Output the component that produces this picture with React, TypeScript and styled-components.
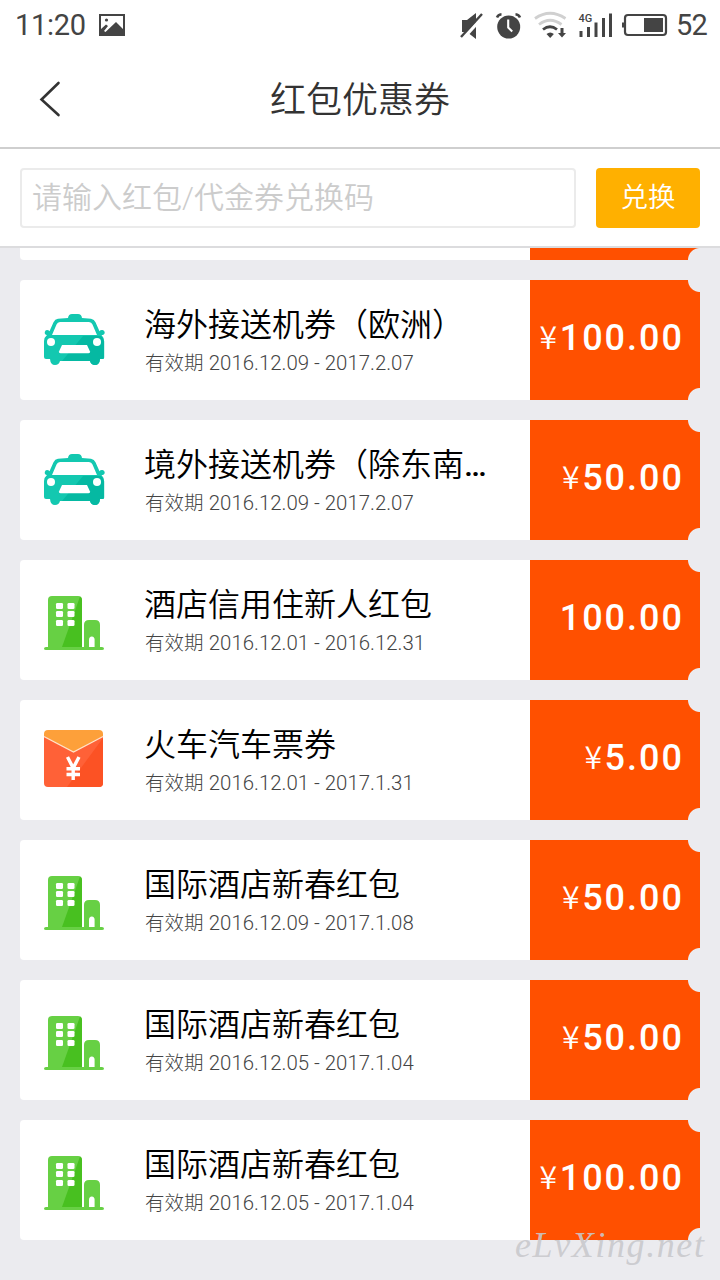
import React from "react";
import styled, { createGlobalStyle } from "styled-components";

const GlobalStyle = createGlobalStyle`
  * { box-sizing: border-box; }
  body {
    margin: 0;
    background: #ebebef;
    font-family: Roboto, "Noto Sans CJK SC", sans-serif;
  }
`;

const Screen = styled.div`
  position: relative;
  width: 720px;
  height: 1280px;
  overflow: hidden;
  display: flex;
  flex-direction: column;
  background: #ebebef;
`;

const StatusBar = styled.div`
  height: 50px;
  flex: none;
  display: flex;
  align-items: center;
  justify-content: space-between;
  padding: 0 12px 0 15px;
  background: #fff;
  color: #444;
  font-size: 29px;
  font-weight: 370;
  line-height: 50px;
`;

const StatusGroup = styled.div`
  display: flex;
  align-items: center;
  svg { display: block; }
`;

const Clock = styled.span`
  width: 84px;
  white-space: nowrap;
  letter-spacing: -0.3px;
`;

const Battery = styled.span`
  margin-left: 8px;
  width: 32px;
  white-space: nowrap;
  letter-spacing: -0.8px;
`;

const NavBar = styled.header`
  height: 99px;
  flex: none;
  display: grid;
  grid-template-columns: 100px 1fr 100px;
  align-items: center;
  background: #fff;
  border-bottom: 2px solid #cfcfcf;
`;

const BackButton = styled.button`
  border: 0;
  padding: 0 0 0 38px;
  background: none;
  display: flex;
  height: 100%;
  align-items: center;
`;

const Title = styled.h1`
  margin: 0;
  padding-top: 4px;
  text-align: center;
  font-size: 36px;
  line-height: 52px;
  font-weight: 350;
  color: #333;
`;

const RedeemBar = styled.div`
  height: 99px;
  flex: none;
  display: flex;
  gap: 20px;
  padding: 19px 20px 0;
  background: #fff;
  border-bottom: 2px solid #dcdcde;
`;

const CodeField = styled.div`
  width: 556px;
  height: 60px;
  padding-left: 10px;
  border: 2px solid #ebebeb;
  border-radius: 4px;
  font-size: 30px;
  line-height: 55px;
  font-weight: 350;
  color: #ccc;
`;

const RedeemButton = styled.button`
  width: 104px;
  height: 60px;
  padding: 0 0 6px;
  border: 0;
  border-radius: 4px;
  background: #ffb000;
  color: #fff;
  font-family: inherit;
  font-size: 27.5px;
  font-weight: 350;
`;

const List = styled.main`
  flex: 1;
  min-height: 0;
  overflow: hidden;
  display: flex;
  flex-direction: column;
  justify-content: flex-start;
  gap: 20px;
  padding: 0 20px;
`;

const Card = styled.article<{ $peek?: boolean }>`
  flex: none;
  height: ${(p) => (p.$peek ? 12 : 120)}px;
  display: flex;
  overflow: hidden;
  border-radius: ${(p) => (p.$peek ? "0 0 0 4px" : "4px 0 0 4px")};
  background: linear-gradient(to right, #fff 510px, transparent 510px);
`;

const IconCell = styled.div`
  width: 125px;
  padding: 30px 0 0 24px;
  svg { display: block; }
`;

const Info = styled.div`
  width: 385px;
  padding: 22px 40px 0 0;
`;

const Name = styled.div`
  width: 345px;
  margin-left: -1px;
  overflow: hidden;
  white-space: nowrap;
  font-size: 32px;
  line-height: 46px;
  font-weight: 350;
  color: #000;
`;

const Ellipsis = styled.span`
  font-weight: 500;
`;

const Validity = styled.div`
  font-size: 19.5px;
  line-height: 30px;
  font-weight: 300;
  color: #444;
  white-space: nowrap;
`;

const Dates = styled.span`
  margin-left: 0.5px;
  font-size: 20.4px;
  font-weight: 330;
`;

const Amount = styled.div<{ $peek?: boolean }>`
  width: 170px;
  height: 100%;
  padding-right: 16px;
  display: flex;
  align-items: baseline;
  justify-content: flex-end;
  color: #fff;
  font-size: 36px;
  line-height: 116px;
  font-weight: 500;
  letter-spacing: 2px;
  background: ${(p) =>
    p.$peek
      ? "radial-gradient(circle at 100% 100%, transparent 11.5px, #ff5000 12.5px)"
      : `radial-gradient(circle at 100% 0, transparent 11.5px, #ff5000 12.5px) top / 100% 50% no-repeat,
         radial-gradient(circle at 100% 100%, transparent 11.5px, #ff5000 12.5px) bottom / 100% 50% no-repeat`};
`;

const Currency = styled.span`
  padding-bottom: 2px;
  font-family: "Noto Sans CJK SC", sans-serif;
  font-size: 32px;
  line-height: 1;
  font-weight: 350;
  letter-spacing: 2.5px;
  transform: translateY(-1px);
`;

const Watermark = styled.div`
  position: absolute;
  left: 515px;
  top: 1225px;
  font-family: "Liberation Serif", serif;
  font-style: italic;
  font-size: 36px;
  line-height: 40px;
  letter-spacing: 1.6px;
  white-space: nowrap;
  color: rgba(200, 200, 204, 0.9);
`;

const PictureIcon = () => (
  <svg width="26" height="22" viewBox="0 0 26 22">
    <path fillRule="evenodd" fill="#444" d="M0 0h26v22H0zM2 2v13l5-4.500 2 1.500-4 5 1.500 1L17 8l7 7V2z" />
    <circle cx="7.5" cy="6" r="1.6" fill="#444" />
  </svg>
);

const StatusIcons = () => (
  <svg width="209" height="32" viewBox="459 9 209 32" fill="#444">
    <path d="M462 20h5l9-7v26l-9-7h-5z" />
    <path d="M484 15.500L463 38.500" stroke="#fff" strokeWidth="3.4" />
    <path d="M482 14L461 37" stroke="#444" strokeWidth="2.4" />
    <circle cx="508.7" cy="27" r="11.5" />
    <path d="M497 17.5q1-3 4.5-3.3M520 17.5q-1-3-4.5-3.3" stroke="#444" strokeWidth="2.5" fill="none" />
    <path d="M508.2 19.500v8l4 4" stroke="#fff" strokeWidth="2.1" fill="none" />
    <g fill="none" strokeWidth="2.8">
      <path d="M535 18.500Q550 8 565.500 18.500" stroke="#d0d0d0" />
      <path d="M539 24.500Q550 16 561.500 24.500" stroke="#d0d0d0" />
      <path d="M543 29.500Q550 24 557 29.500" stroke="#444" />
    </g>
    <path d="M546.500 34q3.700-3 7.400 0l-3.700 4zM560.500 28h3v5h2.500l-4 4.500-4-4.500h2.500z" />
    <text x="578.5" y="22" fontSize="11" fontWeight="500" fontFamily="Roboto, sans-serif">4G</text>
    <path d="M579.500 31h3v6h-3zM587 27h3v10h-3zM594.500 22.500h3V37h-3zM602 18h3v19h-3zM609 13.500h3V37h-3z" />
    <rect x="625" y="15" width="41" height="20" rx="3" fill="none" stroke="#444" strokeWidth="2.2" />
    <path d="M622 22.500h2v5h-2zM644 18h19v14h-19z" />
  </svg>
);

const BackIcon = () => (
  <svg width="24" height="36" viewBox="0 0 24 36">
    <path d="M20.500 2L3.500 18.500 20.500 34" fill="none" stroke="#333" strokeWidth="2.6" strokeLinecap="round" />
  </svg>
);

const TaxiIcon = () => (
  <svg width="61" height="60" viewBox="0 0 61 60">
    <path
      fill="#13c8b0"
      d="M24 8q.5-4 4-4h6q3.500 0 4 4l9 .7q3.300.5 4.500 3.500l4 9q.8-1.500 3-1.200 2 .3 2.200 2.200.2 2.800-3.200 2.800 2.700 2.700 2.700 6.500v16q0 1.500-1.700 1.500H56q-.5 6-5 6-4 0-5-4H16q-1 4-5 4-4.500 0-5-6H2q-2 0-2-2V31q0-3.500 3-6-2.700-.4-2.200-3 .4-2 2.200-2 1.700 0 2.500 1.200l4-9q1.500-3 4.500-3.400z"
    />
    <path fill="#05b9a2" d="M39 26h18q3 3 3 6v15.500q0 1.500-2 1.500h-2q-.5 6-5 6-4 0-5-4H18z" />
    <path fill="#fff" d="M16 12h29q2.500 0 3.500 2.500L53 25H8l4.500-10.500Q13.500 12 16 12z" />
    <circle cx="7" cy="32" r="4" fill="#fff" />
    <circle cx="53" cy="32" r="4" fill="#fff" />
    <path fill="#fff" d="M18 35h25l3 6.500q.5 1.800-1.500 1.800h-28q-2 0-1.500-1.800z" />
  </svg>
);

const HotelIcon = () => (
  <svg width="60" height="60" viewBox="0 0 60 60">
    <path fill="#67d044" d="M4 57V10q0-4 4-4h26q4 0 4 4v47z" />
    <path fill="#48c020" d="M36 6.500Q38 7.500 38 10v47H18z" />
    <path fill="#67d044" d="M40 57V35q0-5 5-5h6q5 0 5 5v22z" />
    <path fill="#67d044" d="M2 57h56q2 0 2 1.500T58 60H2q-2 0-2-1.500T2 57z" />
    <path fill="#fff" d="M45 57v-7q0-3.500 2.800-3.500t2.800 3.500v7z" />
    <g fill="#fff">
      {[13, 21, 30].map((y) => (
        <React.Fragment key={y}>
          <rect x="12" y={y} width="7" height="6" rx="1.300" />
          <rect x="23.500" y={y} width="7" height="6" rx="1.300" />
        </React.Fragment>
      ))}
    </g>
  </svg>
);

const EnvelopeIcon = () => (
  <svg width="60" height="60" viewBox="0 0 60 60">
    <path fill="#ff6137" d="M0 5h59v48q0 4-4 4H4q-4 0-4-4z" />
    <path fill="#fc5224" d="M59 8v45q0 4-4 4H23z" />
    <path fill="#fda03a" d="M0 6V4q0-4 4-4h51q4 0 4 4v2L29.500 22z" />
    <path d="M0 6.500L29.500 22 59 6.500" fill="none" stroke="#ffe3c8" strokeWidth="1.400" />
    <path d="M23.500 27l5.700 11L35 27M29.200 37v13M22.500 38.800h13.500M22.500 44.500h13.500" fill="none" stroke="#fff" strokeWidth="3.4" />
  </svg>
);

const icons = { taxi: TaxiIcon, hotel: HotelIcon, envelope: EnvelopeIcon };

type Coupon = {
  icon: keyof typeof icons;
  name: string;
  truncated?: boolean;
  from: string;
  to: string;
  amount: string;
  plain?: boolean;
};

const coupons: Coupon[] = [
  { icon: "taxi", name: "海外接送机券（欧洲）", from: "2016.12.09", to: "2017.2.07", amount: "100.00" },
  { icon: "taxi", name: "境外接送机券（除东南", truncated: true, from: "2016.12.09", to: "2017.2.07", amount: "50.00" },
  { icon: "hotel", name: "酒店信用住新人红包", from: "2016.12.01", to: "2016.12.31", amount: "100.00", plain: true },
  { icon: "envelope", name: "火车汽车票券", from: "2016.12.01", to: "2017.1.31", amount: "5.00" },
  { icon: "hotel", name: "国际酒店新春红包", from: "2016.12.09", to: "2017.1.08", amount: "50.00" },
  { icon: "hotel", name: "国际酒店新春红包", from: "2016.12.05", to: "2017.1.04", amount: "50.00" },
  { icon: "hotel", name: "国际酒店新春红包", from: "2016.12.05", to: "2017.1.04", amount: "100.00" },
];

const CouponCard = ({ coupon }: { coupon: Coupon }) => {
  const Icon = icons[coupon.icon];
  return (
    <Card>
      <IconCell><Icon /></IconCell>
      <Info>
        <Name>
          {coupon.name}
          {coupon.truncated && <Ellipsis>…</Ellipsis>}
        </Name>
        <Validity>有效期 <Dates>{coupon.from} - {coupon.to}</Dates></Validity>
      </Info>
      <Amount>
        {!coupon.plain && <Currency>¥</Currency>}
        {coupon.amount}
      </Amount>
    </Card>
  );
};

const PeekSpacer = styled.div`
  width: 510px;
`;

export default function App() {
  return (
    <Screen>
      <GlobalStyle />
      <StatusBar>
        <StatusGroup><Clock>11:20</Clock><PictureIcon /></StatusGroup>
        <StatusGroup><StatusIcons /><Battery>52</Battery></StatusGroup>
      </StatusBar>
      <NavBar>
        <BackButton aria-label="返回"><BackIcon /></BackButton>
        <Title>红包优惠券</Title>
      </NavBar>
      <RedeemBar>
        <CodeField>请输入红包/代金券兑换码</CodeField>
        <RedeemButton>兑换</RedeemButton>
      </RedeemBar>
      <List>
        <Card $peek><PeekSpacer /><Amount $peek /></Card>
        {coupons.map((c, i) => <CouponCard key={i} coupon={c} />)}
      </List>
      <Watermark>eLvXing.net</Watermark>
    </Screen>
  );
}
